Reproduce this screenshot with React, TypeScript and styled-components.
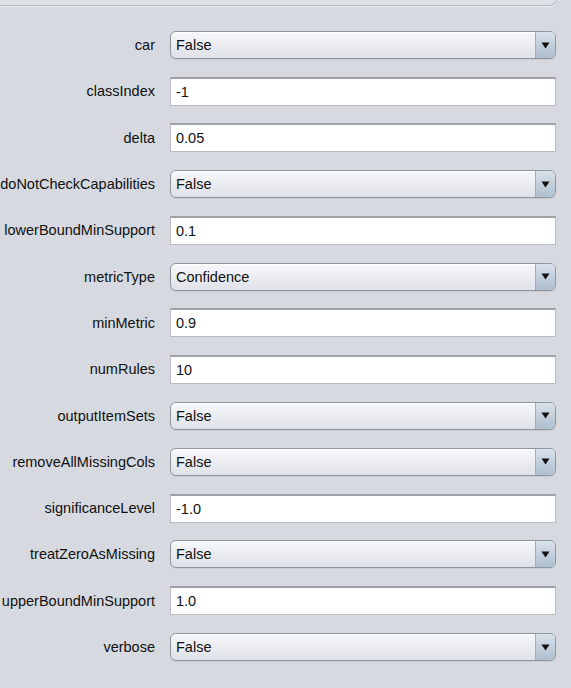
import React from 'react'
import styled, { createGlobalStyle } from 'styled-components'

const GlobalStyle = createGlobalStyle`
  html, body {
    margin: 0;
    padding: 0;
    background: #d6d9df;
    overflow: hidden;
  }
  body {
    font-family: "Liberation Sans", Arial, sans-serif;
    font-size: 14.5px;
    color: #000;
  }
`

const Page = styled.div`
  width: 571px;
  height: 688px;
  background: #d6d9df;
  overflow: hidden;
`

const TopPanel = styled.div`
  margin: -20px 14px 0 -10px;
  height: 25px;
  border: 1px solid #b4b8c0;
  border-top: none;
  border-radius: 0 0 8px 8px;
  background: #dde0e5;
  box-shadow: 0 1px 0 #eceef1;
`

const Form = styled.div`
  display: grid;
  grid-template-columns: 155px 1fr;
  grid-auto-rows: 46.3px;
  column-gap: 15px;
  padding: 16px 15px 0 0;
`

/* rtl so that a long name overflows off the left edge, as in the reference */
const Label = styled.div`
  display: flex;
  align-items: center;
  justify-content: flex-start;
  white-space: nowrap;
  direction: rtl;
  color: #111;
  span {
    direction: ltr;
    unicode-bidi: isolate;
  }
`

const Cell = styled.div`
  display: flex;
  align-items: center;
`

const Combo = styled.div`
  flex: 1;
  height: 28px;
  box-sizing: border-box;
  display: flex;
  align-items: stretch;
  border: 1px solid #8f959e;
  border-radius: 6px;
  background: linear-gradient(#f7f8fa 0%, #eceef2 45%, #dee1e6 100%);
  box-shadow: inset 0 1px 0 #ffffff, 0 1px 0 #c7cbd2;
  overflow: hidden;
`

const ComboText = styled.div`
  flex: 1;
  display: flex;
  align-items: center;
  padding-left: 5px;
  color: #111;
`

const ArrowButton = styled.div`
  width: 19px;
  display: flex;
  align-items: center;
  justify-content: center;
  border-left: 1px solid #a3acb8;
  background: linear-gradient(#d9e2eb 0%, #c3cfdc 50%, #aebfd0 100%);
`

const Field = styled.div`
  flex: 1;
  height: 29px;
  box-sizing: border-box;
  display: flex;
  align-items: center;
  padding-left: 5px;
  background: #fff;
  border: 1px solid #b9bdc3;
  border-top: 2px solid #9ea2a8;
  color: #111;
`

type Row = { name: string; value: string; kind: 'combo' | 'field' }

const rows: Row[] = [
  { name: 'car', value: 'False', kind: 'combo' },
  { name: 'classIndex', value: '-1', kind: 'field' },
  { name: 'delta', value: '0.05', kind: 'field' },
  { name: 'doNotCheckCapabilities', value: 'False', kind: 'combo' },
  { name: 'lowerBoundMinSupport', value: '0.1', kind: 'field' },
  { name: 'metricType', value: 'Confidence', kind: 'combo' },
  { name: 'minMetric', value: '0.9', kind: 'field' },
  { name: 'numRules', value: '10', kind: 'field' },
  { name: 'outputItemSets', value: 'False', kind: 'combo' },
  { name: 'removeAllMissingCols', value: 'False', kind: 'combo' },
  { name: 'significanceLevel', value: '-1.0', kind: 'field' },
  { name: 'treatZeroAsMissing', value: 'False', kind: 'combo' },
  { name: 'upperBoundMinSupport', value: '1.0', kind: 'field' },
  { name: 'verbose', value: 'False', kind: 'combo' },
]

const DownArrow = () => (
  <svg width="9" height="7" viewBox="0 0 9 7">
    <path d="M0.5 0.5 H8.5 L4.5 6.5 Z" fill="#111" />
  </svg>
)

export default function App() {
  return (
    <Page>
      <GlobalStyle />
      <TopPanel />
      <Form>
        {rows.map((r) => (
          <React.Fragment key={r.name}>
            <Label>
              <span>{r.name}</span>
            </Label>
            <Cell>
              {r.kind === 'combo' ? (
                <Combo>
                  <ComboText>{r.value}</ComboText>
                  <ArrowButton>
                    <DownArrow />
                  </ArrowButton>
                </Combo>
              ) : (
                <Field>{r.value}</Field>
              )}
            </Cell>
          </React.Fragment>
        ))}
      </Form>
    </Page>
  )
}
